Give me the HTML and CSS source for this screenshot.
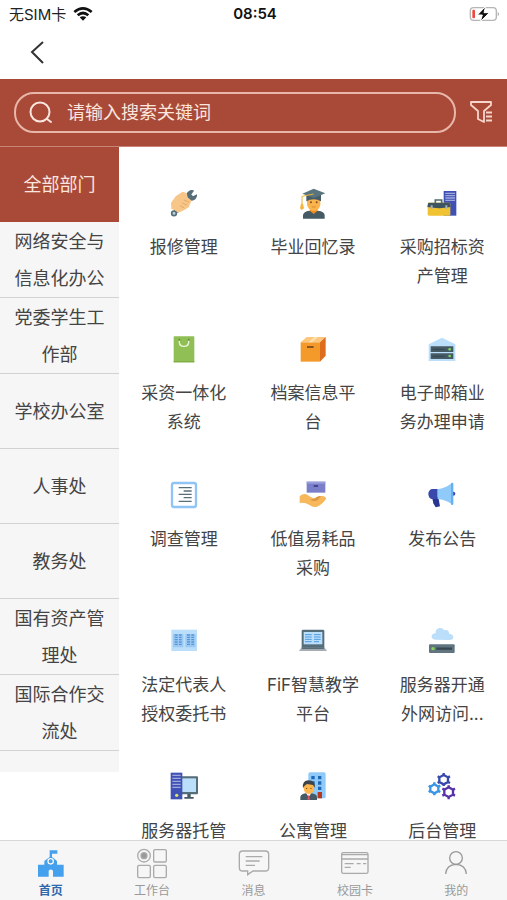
FILE: index.html
```
<!DOCTYPE html>
<html lang="zh-CN">
<head>
    <meta charset="UTF-8">
    <meta name="viewport" content="width=device-width, initial-scale=1.0">
    <title>全部部门</title>
    <link rel="stylesheet" href="styles.css">
</head>
<body>

    <!-- Status Bar -->
    <div class="status-bar">
        <div class="carrier">
            <span>无SIM卡</span>
            <svg width="20" height="14" viewBox="0 0 60 42" fill="none" stroke="#111" stroke-width="8">
                <path d="M4 15Q30-7 56 15M14 25Q30 11 46 25"/>
                <path d="M20 31Q30 24 40 31L30 41Z" fill="#111" stroke="none"/>
            </svg>
        </div>
        <span class="time">08:54</span>
        <div class="battery">
            <svg width="32" height="16" viewBox="0 0 96 48">
                <rect x="4" y="5" width="78" height="38" rx="10" fill="none" stroke="#b5b5b5" stroke-width="4"/>
                <path d="M86 17Q95 24 86 31Z" fill="#b5b5b5"/>
                <rect x="10" y="11" width="8" height="26" rx="3" fill="#f0483e"/>
                <path d="M50 1L25 27H40L34 47L61 20H45Z" fill="#111" stroke="#fff" stroke-width="3"/>
            </svg>
        </div>
    </div>

    <!-- Navigation -->
    <header>
        <button class="back-btn" aria-label="返回">
            <svg width="16" height="24" viewBox="0 0 16 24" fill="none" stroke="#333" stroke-width="2">
                <path d="M13 1L2 11L13 22"/>
            </svg>
        </button>
    </header>

    <!-- Search -->
    <form class="search-form">
        <div class="search-box">
            <svg width="24" height="24" viewBox="0 0 24 24" fill="none" stroke="#fbe6df" stroke-width="2" stroke-linecap="round">
                <circle cx="10" cy="11" r="9.500"/>
                <path d="M17 18L21 21"/>
            </svg>
            <input type="text" id="keyword" placeholder="请输入搜索关键词" aria-label="请输入搜索关键词">
        </div>
        <button type="button" class="filter-btn" aria-label="筛选">
            <svg width="24" height="24" viewBox="0 0 24 24" fill="none" stroke="#f6d5cb" stroke-width="1.800" stroke-linejoin="round">
                <path d="M1 1H21V4L14 10V21L8 18V10L1 4Z"/>
                <path d="M16 11.500H22M16 15.500H22M16 19.500H22"/>
            </svg>
        </button>
    </form>

    <main>
        <!-- Departments -->
        <nav class="departments">
            <a href="#" class="active">全部部门</a>
            <a href="#">网络安全与信息化办公</a>
            <a href="#">党委学生工作部</a>
            <a href="#">学校办公室</a>
            <a href="#">人事处</a>
            <a href="#">教务处</a>
            <a href="#">国有资产管理处</a>
            <a href="#">国际合作交流处</a>
        </nav>

        <!-- Services -->
        <div class="services">
            <a href="#" class="service">
                <svg viewBox="0 0 84 84">
                    <path d="M13 72L66 19" stroke="#546e7a" stroke-width="12"/>
                    <path d="M69 6A14 14 0 1 0 79 19L68 24L61 17Z" fill="#546e7a" stroke="#546e7a" stroke-width="4"/>
                    <circle cx="12" cy="73" r="7" fill="#b9d0dc" stroke="#546e7a" stroke-width="5"/>
                    <path d="M3 42L17 22L38 8L50 12L53 25L65 35L60 44L57 54L48 60L37 66L25 71L14 64L4 59Z" fill="#f7c689"/>
                    <path d="M37 42L52 49M30 50L43 57M42 33L57 40" stroke="#e7a964" stroke-width="3"/>
                </svg>
                <span>报修管理</span>
            </a>
            <a href="#" class="service">
                <svg viewBox="0 0 84 84">
                    <path d="M12 89V78Q14 67 31 65H57Q76 67 77 78V89Z" fill="#455a64"/>
                    <path d="M33 57H55V66L44 75L33 66Z" fill="#f18b1c"/>
                    <path d="M24 26H64V47Q61 64 44 66Q28 64 24 47Z" fill="#fbb34c"/>
                    <path d="M22 18H66V37Q44 24 22 37Z" fill="#465c66"/>
                    <path d="M10 14L44-1L79 13L45 27Z" fill="#5a747f"/>
                    <path d="M44 15L9 22V48" fill="none" stroke="#e8b43b" stroke-width="3"/>
                    <path d="M6 44H12L15 58L8 63L3 58Z" fill="#f5b43b"/>
                    <circle cx="36" cy="40" r="3" fill="#805030"/>
                    <circle cx="53" cy="40" r="3" fill="#805030"/>
                    <path d="M38 53Q44 56 50 53" stroke="#ca7325" stroke-width="2" fill="none"/>
                </svg>
                <span>毕业回忆录</span>
            </a>
            <a href="#" class="service">
                <svg viewBox="0 0 84 84">
                    <path d="M47 6H85V80H47Z" fill="#3f51b5"/>
                    <path d="M52 13H81M52 20H81M52 27H81M52 34H81" stroke="#9fa8da" stroke-width="4"/>
                    <path d="M22 43V33H41V43" fill="none" stroke="#4f6b68" stroke-width="5"/>
                    <rect x="-1" y="41" width="68" height="39" rx="4" fill="#f1c232"/>
                    <path d="M1 41H65L68 54Q34 61-2 54Z" fill="#3e5560"/>
                    <path d="M11 49V59M55 49V59" stroke="#9fb3bf" stroke-width="6"/>
                </svg>
                <span>采购招标资产管理</span>
            </a>
            <a href="#" class="service">
                <svg viewBox="0 0 84 84">
                    <rect x="11" y="4" width="62" height="78" rx="2" fill="#90bf55"/>
                    <path d="M11 78H73V82H11Z" fill="#80ad47"/>
                    <path d="M28 16V22Q29 34 42 34Q55 34 56 22V16" fill="none" stroke="#e9f6d7" stroke-width="4"/>
                    <circle cx="28" cy="14" r="3" fill="#638d37"/>
                    <circle cx="56" cy="14" r="3" fill="#638d37"/>
                </svg>
                <span>采资一体化系统</span>
            </a>
            <a href="#" class="service">
                <svg viewBox="0 0 84 84">
                    <path d="M5 22L23 6H80L63 22Z" fill="#ffc77e"/>
                    <path d="M63 22L80 6V62L63 80Z" fill="#dd6d1c"/>
                    <path d="M5 22H63V80H5Z" fill="#f39a2b"/>
                    <path d="M29 22L46 6H56L40 22Z" fill="#ffe0ac"/>
                    <path d="M24 36H44" stroke="#754722" stroke-width="5"/>
                </svg>
                <span>档案信息平台</span>
            </a>
            <a href="#" class="service">
                <svg viewBox="0 0 84 84">
                    <path d="M42 8L82 28V78H2V28Z" fill="#bbdefb"/>
                    <path d="M8 34H76V51H8ZM8 55H76V72H8Z" fill="#455a64"/>
                    <path d="M14 43H50M14 64H50" stroke="#334852" stroke-width="3"/>
                    <circle cx="65" cy="43" r="4" fill="#7bd65a"/>
                    <circle cx="65" cy="63" r="4" fill="#7bd65a"/>
                </svg>
                <span>电子邮箱业务办理申请</span>
            </a>
            <a href="#" class="service">
                <svg viewBox="0 0 84 84">
                    <rect x="6" y="6" width="72" height="72" rx="6" fill="#fff" stroke="#90c4f4" stroke-width="7"/>
                    <path d="M26 20H65M41 30H65M26 40H65M41 50H65M26 61H65" stroke="#586f79" stroke-width="4"/>
                </svg>
                <span>调查管理</span>
            </a>
            <a href="#" class="service">
                <svg viewBox="0 0 84 84">
                    <path d="M23 2H79V35H23Z" fill="#7b7fca"/>
                    <path d="M23 2H79V8H23Z" fill="#9a9fda"/>
                    <path d="M44 15H57" stroke="#373c83" stroke-width="5"/>
                    <path d="M2 46Q14 34 26 42Q36 50 47 53L66 45Q76 43 82 52Q72 70 54 77Q42 80 30 71Q17 63 2 66Z" fill="#f6b85a"/>
                    <path d="M33 56Q46 64 57 57L66 46Q58 42 45 53Z" fill="#dd9841"/>
                </svg>
                <span>低值易耗品采购</span>
            </a>
            <a href="#" class="service">
                <svg viewBox="0 0 84 84">
                    <circle cx="76" cy="38" r="6" fill="#3949ab"/>
                    <path d="M12 48H31L36 76L23 79L16 67Z" fill="#283593"/>
                    <path d="M29 24H11Q1 28 1 39Q2 52 11 54H29Z" fill="#3949ab"/>
                    <path d="M29 25Q51 22 71 7V69Q51 55 29 54Z" fill="#90caf9"/>
                    <rect x="69" y="5" width="7" height="67" rx="3" fill="#64b0f2"/>
                </svg>
                <span>发布公告</span>
            </a>
            <a href="#" class="service">
                <svg viewBox="0 0 84 84">
                    <path d="M4 8H81V72H4Z" fill="#bbdefb"/>
                    <path d="M9 21H40V61H9ZM46 21H77V61H46Z" fill="#9cc9f4"/>
                    <path d="M14 24H23M27 24H35M14 31H23M27 31H35M14 38H23M27 38H35M14 45H23M27 45H35M14 52H23M27 52H35M51 24H60M64 24H72M51 31H60M64 31H72M51 38H60M64 38H72M51 45H60M64 45H72M51 52H60M64 52H72" stroke="#5696d8" stroke-width="4"/>
                </svg>
                <span>法定代表人授权委托书</span>
            </a>
            <a href="#" class="service">
                <svg viewBox="0 0 84 84">
                    <rect x="8" y="8" width="68" height="58" rx="4" fill="#546e7a"/>
                    <path d="M14 15H70V52H14Z" fill="#bbdefb"/>
                    <path d="M18 23H38M18 30H38M18 37H38M18 44H38M45 23H65M45 30H65M45 37H65M45 44H60" stroke="#4d9bde" stroke-width="3"/>
                    <path d="M7 62H77L84 72H0Z" fill="#a5adb2"/>
                    <path d="M7 62H77L74 66H10Z" fill="#596d78"/>
                </svg>
                <span>FiF智慧教学平台</span>
            </a>
            <a href="#" class="service">
                <svg viewBox="0 0 84 84">
                    <path d="M22 38C6 38 8 18 23 19C21 2 43-2 48 10C59 7 64 13 63 20C81 21 79 39 65 39Z" fill="#bbdefb"/>
                    <rect x="3" y="52" width="77" height="26" rx="3" fill="#607580"/>
                    <path d="M25 65H72" stroke="#374a54" stroke-width="7"/>
                    <circle cx="15" cy="65" r="5" fill="#85d64f"/>
                </svg>
                <span>服务器开通外网访问...</span>
            </a>
            <a href="#" class="service">
                <svg viewBox="0 0 84 84">
                    <rect x="29" y="10" width="55" height="54" rx="3" fill="#546e7a"/>
                    <path d="M36 16H78V57H36Z" fill="#bbdefb"/>
                    <path d="M52 63H62V72H71V77H43V72H52Z" fill="#455a64"/>
                    <path d="M2-1H37V79H2Z" fill="#3f51b5"/>
                    <path d="M7 7H32M7 16H32M7 25H32M7 34H32M7 43H32" stroke="#9fa8da" stroke-width="4"/>
                    <circle cx="20" cy="67" r="5" fill="#d9e66c"/>
                </svg>
                <span>服务器托管</span>
            </a>
            <a href="#" class="service">
                <svg viewBox="0 0 84 84">
                    <rect x="28" y="-2" width="52" height="78" rx="5" fill="#90caf9"/>
                    <path d="M37 9H47V19H37ZM57 9H67V19H57ZM37 25H47V35H37ZM57 25H67V35H57ZM57 41H67V51H57Z" fill="#1e69b5"/>
                    <path d="M56 57H69V76H56Z" fill="#b73720"/>
                    <path d="M4 81V72Q6 63 20 61H37Q53 63 54 72V81Z" fill="#455a64"/>
                    <path d="M21 60H37L29 72Z" fill="#fff"/>
                    <path d="M29 64L33 80H25Z" fill="#ec5265"/>
                    <path d="M14 33H45V47Q43 62 29 63Q16 61 14 47Z" fill="#ffb74d"/>
                    <path d="M12 45Q9 22 29 22Q50 23 47 45L42 36L24 33L17 38Z" fill="#3e4448"/>
                    <circle cx="23" cy="46" r="2" fill="#704123"/>
                    <circle cx="36" cy="46" r="2" fill="#704123"/>
                </svg>
                <span>公寓管理</span>
            </a>
            <a href="#" class="service">
                <svg viewBox="0 0 84 84">
                    <g fill="none" stroke="#3949ab" stroke-width="7">
                        <path d="M47 6L60 13V27L47 34L34 27V13Z"/>
                        <path d="M47 6V0M60 13L66 10M60 27L66 30M47 34V39M34 27L29 30M34 13L29 10"/>
                    </g>
                    <g fill="none" stroke="#3995e5" stroke-width="7">
                        <path d="M19 34L31 41V54L19 61L7 54V41Z"/>
                        <path d="M19 34V28M31 41L37 38M31 54L37 57M19 61V67M7 54L2 57M7 41L2 38"/>
                    </g>
                    <g fill="none" stroke="#5633a8" stroke-width="7">
                        <path d="M62 43L75 50V65L62 72L49 65V50Z"/>
                        <path d="M62 43V37M75 50L81 47M75 65L81 68M62 72V79M49 65L43 68M49 50L43 47"/>
                    </g>
                </svg>
                <span>后台管理</span>
            </a>
        </div>
    </main>

    <!-- Tab Bar -->
    <nav class="tab-bar">
        <a href="#" class="current">
            <svg viewBox="0 0 96 96" fill="#45a0ee">
                <path d="M9 47H28V36L44 24V4H67V14H51V24L66 36V47H86V83H54V65Q47 58 41 65V83H9Z"/>
                <circle cx="47" cy="37" r="8" fill="none" stroke="#f6f6f6" stroke-width="4"/>
            </svg>
            <span>首页</span>
        </a>
        <a href="#">
            <svg viewBox="0 0 96 96" fill="none" stroke="#aaa" stroke-width="4">
                <circle cx="24" cy="20" r="19"/>
                <circle cx="24" cy="20" r="9" fill="#999"/>
                <rect x="53" y="2" width="38" height="37" rx="4"/>
                <rect x="5" y="49" width="38" height="37" rx="4"/>
                <rect x="53" y="49" width="38" height="37" rx="4"/>
            </svg>
            <span>工作台</span>
        </a>
        <a href="#">
            <svg viewBox="0 0 96 96" fill="none" stroke="#aaa" stroke-width="4">
                <path d="M14 6H82Q92 6 92 16V56Q92 66 82 66H45L29 77V66H14Q4 66 4 56V16Q4 6 14 6Z"/>
                <path d="M23 23H73M23 36H65M23 49H51"/>
            </svg>
            <span>消息</span>
        </a>
        <a href="#">
            <svg viewBox="0 0 96 96" fill="none" stroke="#aaa" stroke-width="4">
                <rect x="8" y="11" width="79" height="62" rx="5"/>
                <path d="M8 17H87M8 30H87M17 44H44M53 44H65M72 44H82M17 55H35"/>
            </svg>
            <span>校园卡</span>
        </a>
        <a href="#">
            <svg viewBox="0 0 96 96" fill="none" stroke="#999" stroke-width="4">
                <circle cx="48" cy="27" r="19"/>
                <path d="M17 75Q19 47 48 46Q77 47 79 75"/>
            </svg>
            <span>我的</span>
        </a>
    </nav>

</body>
</html>
```
FILE: styles.css
```
/* General Reset */
* {
    margin: 0;
    padding: 0;
    box-sizing: border-box;
}

body {
    display: flex;
    flex-direction: column;
    height: 100vh;
    font-family: Inter, 'Noto Sans CJK SC', sans-serif;
    background-color: #fff;
    color: #444;
    overflow: hidden;
}

a {
    color: inherit;
    text-decoration: none;
}

button {
    background: none;
    border: none;
    cursor: pointer;
}

svg {
    display: block;
    flex-shrink: 0;
    overflow: visible;
}

/* Status Bar */
.status-bar {
    display: grid;
    grid-template-columns: 1fr auto 1fr;
    align-items: center;
    height: 27px;
    padding: 0 6px 0 9px;
    color: #222;
    font-size: 15px;
}

.carrier {
    display: flex;
    align-items: center;
    gap: 7px;
}

.time {
    font-weight: 600;
    color: #111;
}

.battery {
    justify-self: end;
}

/* Header */
header {
    display: flex;
    align-items: center;
    height: 52px;
    padding: 0 30px;
}

/* Search Form */
.search-form {
    display: flex;
    align-items: center;
    gap: 14px;
    height: 68px;
    padding: 0 13px 0 14px;
    background-color: #a94a38;
    border-bottom: 1px solid #c98476;
}

.search-box {
    display: flex;
    flex: 1;
    align-items: center;
    gap: 13px;
    height: 41px;
    padding: 0 14px;
    border: 2px solid #e8b7aa;
    border-radius: 20px;
}

.search-box input {
    flex: 1;
    min-width: 0;
    height: 32px;
    border: none;
    outline: none;
    background: none;
    color: #fff;
    font-family: inherit;
    font-size: 18px;
}

.search-box input::placeholder {
    color: #fbe6df;
}

main {
    display: flex;
    flex: 1;
    align-items: flex-start;
    min-height: 0;
    overflow: hidden;
}

/* Departments */
.departments {
    flex: 0 0 119px;
    padding-bottom: 21px;
    background-color: #f6f6f6;
}

.departments a {
    display: flex;
    align-items: center;
    justify-content: center;
    min-height: 75px;
    padding: 1px 14px 0;
    border-bottom: 1px solid #d2d2d2;
    font-size: 18px;
    line-height: 37px;
    text-align: center;
}

.departments .active {
    background-color: #a94a38;
    border-color: #a94a38;
    color: #fbe6df;
}

/* Services */
.services {
    display: grid;
    flex: 1;
    grid-template-columns: repeat(3, 1fr);
    row-gap: 44px;
    padding-top: 42px;
}

.service {
    display: flex;
    flex-direction: column;
    align-items: center;
    gap: 16px;
    height: 102px;
    padding: 0 17px;
}

.service svg {
    width: 28px;
    height: 28px;
}

.service span {
    font-size: 17px;
    line-height: 29px;
    text-align: center;
}

/* Tab Bar */
.tab-bar {
    display: flex;
    height: 60px;
    padding-top: 8px;
    background-color: #f6f6f6;
    border-top: 1px solid #d8d8d8;
}

.tab-bar a {
    display: flex;
    flex: 1;
    flex-direction: column;
    align-items: center;
    color: #999;
    font-size: 12px;
    line-height: 20px;
}

.tab-bar svg {
    width: 32px;
    height: 32px;
}

.tab-bar .current {
    color: #2e69ac;
    font-weight: bold;
}
```
